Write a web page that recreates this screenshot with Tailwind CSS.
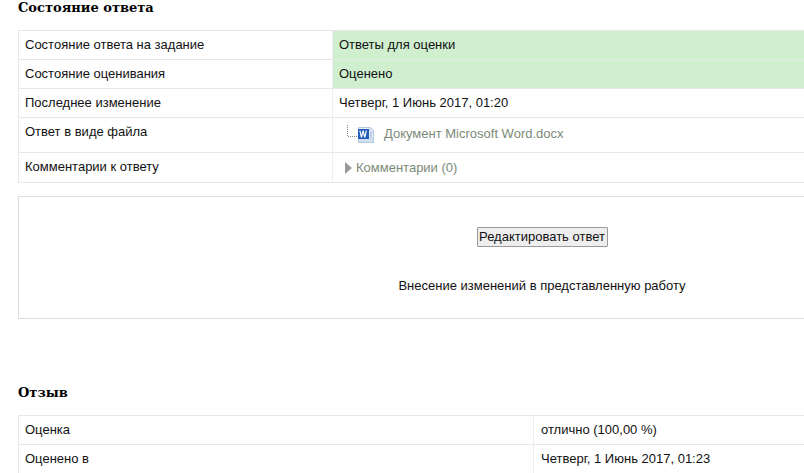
<!DOCTYPE html>
<html lang="ru">
<head>
<meta charset="utf-8">
<script src="https://cdn.jsdelivr.net/npm/@tailwindcss/browser@4"></script>
</head>
<body class="bg-white overflow-hidden font-['Liberation_Sans',Arial,sans-serif] text-[13px] text-[#111]">
<div class="w-[804px] h-[473px] overflow-hidden pl-[18px]">
  <h3 class="pt-[1px] font-['DejaVu_Serif',serif] font-bold text-[13px] leading-[14px] h-[30px] text-black">Состояние ответа</h3>
  <div class="w-[800px] border-t border-l border-[#e8e8e8]">
    <div class="flex h-[29px] border-b border-[#e8e8e8]">
      <div class="w-[314px] shrink-0 border-r border-[#eeeeee] pl-[6px] pt-[7px] leading-[14px]">Состояние ответа на задание</div>
      <div class="flex-1 bg-[#cfefcf] pl-[6px] pt-[7px] leading-[14px]">Ответы для оценки</div>
    </div>
    <div class="flex h-[29px] border-b border-[#e8e8e8]">
      <div class="w-[314px] shrink-0 border-r border-[#eeeeee] pl-[6px] pt-[7px] leading-[14px]">Состояние оценивания</div>
      <div class="flex-1 bg-[#cfefcf] pl-[6px] pt-[7px] leading-[14px]">Оценено</div>
    </div>
    <div class="flex h-[29px] border-b border-[#e8e8e8]">
      <div class="w-[314px] shrink-0 border-r border-[#eeeeee] pl-[6px] pt-[7px] leading-[14px]">Последнее изменение</div>
      <div class="flex-1 pl-[6px] pt-[7px] leading-[14px]">Четверг, 1 Июнь 2017, 01:20</div>
    </div>
    <div class="flex h-[35px] border-b border-[#e8e8e8]">
      <div class="w-[314px] shrink-0 border-r border-[#eeeeee] pl-[6px] pt-[7px] leading-[14px]">Ответ в виде файла</div>
      <div class="flex-1 flex items-start pl-[14px] pt-[7px]">
        <svg width="28" height="19" viewBox="0 0 28 19" class="shrink-0">
          <path d="M0.5 0v11.5H11" fill="none" stroke="#8a8a8a" stroke-dasharray="1 1"/>
          <path d="M11.5 2.5h12l3 3v12h-15z" fill="#eaf1fa" stroke="#b4c8e2"/>
          <path d="M12 13h14v4H12z" fill="#cfdff2"/>
          <path d="M23 3v3h3" fill="#fff" stroke="#b4c8e2"/>
          <rect x="11" y="4" width="11" height="10" fill="#1f5bb8"/>
          <path d="M12.3 5.5l1.5 7h1.3l1-4.4 1 4.4h1.3l1.5-7h-1.2l-1 4.5-1-4.5h-1.2l-1 4.5-1-4.5z" fill="#fff"/>
          <path d="M23 8h2M23 10h2M23 12h2" stroke="#7fa3d4"/>
        </svg>
        <a class="ml-[9px] leading-[18px] text-[#7b8a78]">Документ Microsoft Word.docx</a>
      </div>
    </div>
    <div class="flex h-[30px] border-b border-[#e8e8e8]">
      <div class="w-[314px] shrink-0 border-r border-[#eeeeee] pl-[6px] pt-[7px] leading-[14px]">Комментарии к ответу</div>
      <div class="flex-1 flex items-center pl-[12px] pt-[1px] text-[#7b8a78]">
        <svg width="7" height="12" viewBox="0 0 7 12" class="shrink-0"><path d="M0 0l7 6-7 6z" fill="#999"/></svg>
        <span class="ml-[4px]">Комментарии (0)</span>
      </div>
    </div>
  </div>
  <div class="w-[1048px] h-[123px] mt-[13px] border border-[#dddddd] flex flex-col items-center">
    <button class="mt-[30px] h-[20px] w-[131px] border border-[#999999] bg-[#eeeeee] pb-[1px] text-[13px] leading-[15px] text-[#111] rounded-[1px]">Редактировать ответ</button>
    <p class="mt-[32px] leading-[14px]">Внесение изменений в представленную работу</p>
  </div>
  <h3 class="mt-[66px] pt-[1px] font-['DejaVu_Serif',serif] font-bold text-[13px] leading-[14px] h-[30px] text-black">Отзыв</h3>
  <div class="w-[800px] border-t border-l border-[#e8e8e8]">
    <div class="flex h-[29px] border-b border-[#e8e8e8]">
      <div class="w-[515px] shrink-0 border-r border-[#eeeeee] pl-[6px] pt-[7px] leading-[14px]">Оценка</div>
      <div class="flex-1 pl-[7px] pt-[7px] leading-[14px]">отлично (100,00 %)</div>
    </div>
    <div class="flex h-[29px] border-b border-[#e8e8e8]">
      <div class="w-[515px] shrink-0 border-r border-[#eeeeee] pl-[6px] pt-[7px] leading-[14px]">Оценено в</div>
      <div class="flex-1 pl-[7px] pt-[7px] leading-[14px]">Четверг, 1 Июнь 2017, 01:23</div>
    </div>
  </div>
</div>
</body>
</html>
